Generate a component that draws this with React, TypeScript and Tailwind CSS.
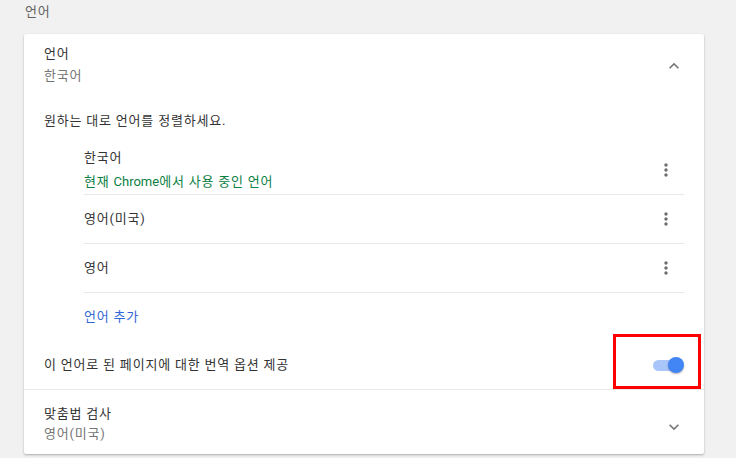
import React from "react";

const font = { fontFamily: 'Roboto, "Noto Sans CJK KR", "Noto Sans", sans-serif' };

function ChevronUp() {
  return (
    <svg width="20" height="20" viewBox="0 0 24 24" fill="#757575">
      <path d="M12 8l-6 6 1.41 1.41L12 10.83l4.59 4.58L18 14z" />
    </svg>
  );
}
function ChevronDown() {
  return (
    <svg width="20" height="20" viewBox="0 0 24 24" fill="#757575">
      <path d="M16.59 8.59L12 13.17 7.41 8.59 6 10l6 6 6-6z" />
    </svg>
  );
}
function Kebab() {
  return (
    <svg width="20" height="20" viewBox="0 0 24 24" fill="#6e6e6e">
      <path d="M12 8c1.1 0 2-.9 2-2s-.9-2-2-2-2 .9-2 2 .9 2 2 2zm0 2c-1.1 0-2 .9-2 2s.9 2 2 2 2-.9 2-2-.9-2-2-2zm0 6c-1.1 0-2 .9-2 2s.9 2 2 2 2-.9 2-2-.9-2-2-2z" />
    </svg>
  );
}

export default function App() {
  return (
    <div className="w-[736px] h-[458px] bg-[#f1f1f1] overflow-hidden text-[13px] tracking-[0.8px]" style={font}>
      <div className="h-[34px] pl-[25px] pt-[1px] leading-[22px] text-[#616161]">언어</div>
      <div className="relative mx-[24px] w-[680px] h-[420px] bg-white rounded-[2px] shadow-[0_1px_2px_rgba(0,0,0,0.2),0_1px_3px_rgba(0,0,0,0.1)]">
        {/* header */}
        <div className="flex items-start pl-[20px] pr-[20px] pt-[9px]">
          <div className="flex-1">
            <div className="leading-[22px] text-[#333]">언어</div>
            <div className="leading-[22px] text-[#757575]">한국어</div>
          </div>
          <div className="pt-[13px]">
            <ChevronUp />
          </div>
        </div>
        <div className="pl-[20px] mt-[24px] leading-[20px] text-[#333]">원하는 대로 언어를 정렬하세요.</div>
        {/* list */}
        <div className="ml-[60px] mr-[20px] mt-[15px]">
          <div className="flex items-center h-[49px] border-b border-[#e8e8e8]">
            <div className="flex-1">
              <div className="leading-[24px] text-[#333]">한국어</div>
              <div className="leading-[24px] text-[#0b8043]">
                현재 <span className="tracking-normal">Chrome</span>에서 사용 중인 언어
              </div>
            </div>
            <div className="mr-[8px]">
              <Kebab />
            </div>
          </div>
          <div className="flex items-center h-[49px] border-b border-[#e8e8e8]">
            <div className="flex-1 text-[#333]">영어(미국)</div>
            <div className="mr-[8px]">
              <Kebab />
            </div>
          </div>
          <div className="flex items-center h-[49px] border-b border-[#e8e8e8]">
            <div className="flex-1 text-[#333]">영어</div>
            <div className="mr-[8px]">
              <Kebab />
            </div>
          </div>
          <div className="flex items-center h-[48px] text-[#3367d6]">언어 추가</div>
        </div>
        {/* toggle row */}
        <div className="flex items-center h-[48px] pl-[20px] pr-[20px]">
          <div className="flex-1 text-[#333]">이 언어로 된 페이지에 대한 번역 옵션 제공</div>
          <div className="relative w-[31px] h-[16px] flex items-center">
            <div className="w-[26px] h-[11px] rounded-full bg-[#a9c6fa]" />
            <div className="absolute right-0 top-0 w-[16px] h-[16px] rounded-full bg-[#4285f4] shadow-[0_1px_2px_rgba(0,0,0,0.3)]" />
          </div>
        </div>
        {/* spell check */}
        <div className="flex items-start border-t border-[#e8e8e8] pl-[20px] pr-[20px] pt-[14px]">
          <div className="flex-1">
            <div className="leading-[20px] text-[#333]">맞춤법 검사</div>
            <div className="leading-[20px] text-[#757575]">영어(미국)</div>
          </div>
          <div className="pt-[13px]">
            <ChevronDown />
          </div>
        </div>
        {/* highlight box */}
        <div className="absolute left-[589px] top-[300px] w-[88px] h-[55px] border-[3px] border-[#ff0000]" />
      </div>
    </div>
  );
}
